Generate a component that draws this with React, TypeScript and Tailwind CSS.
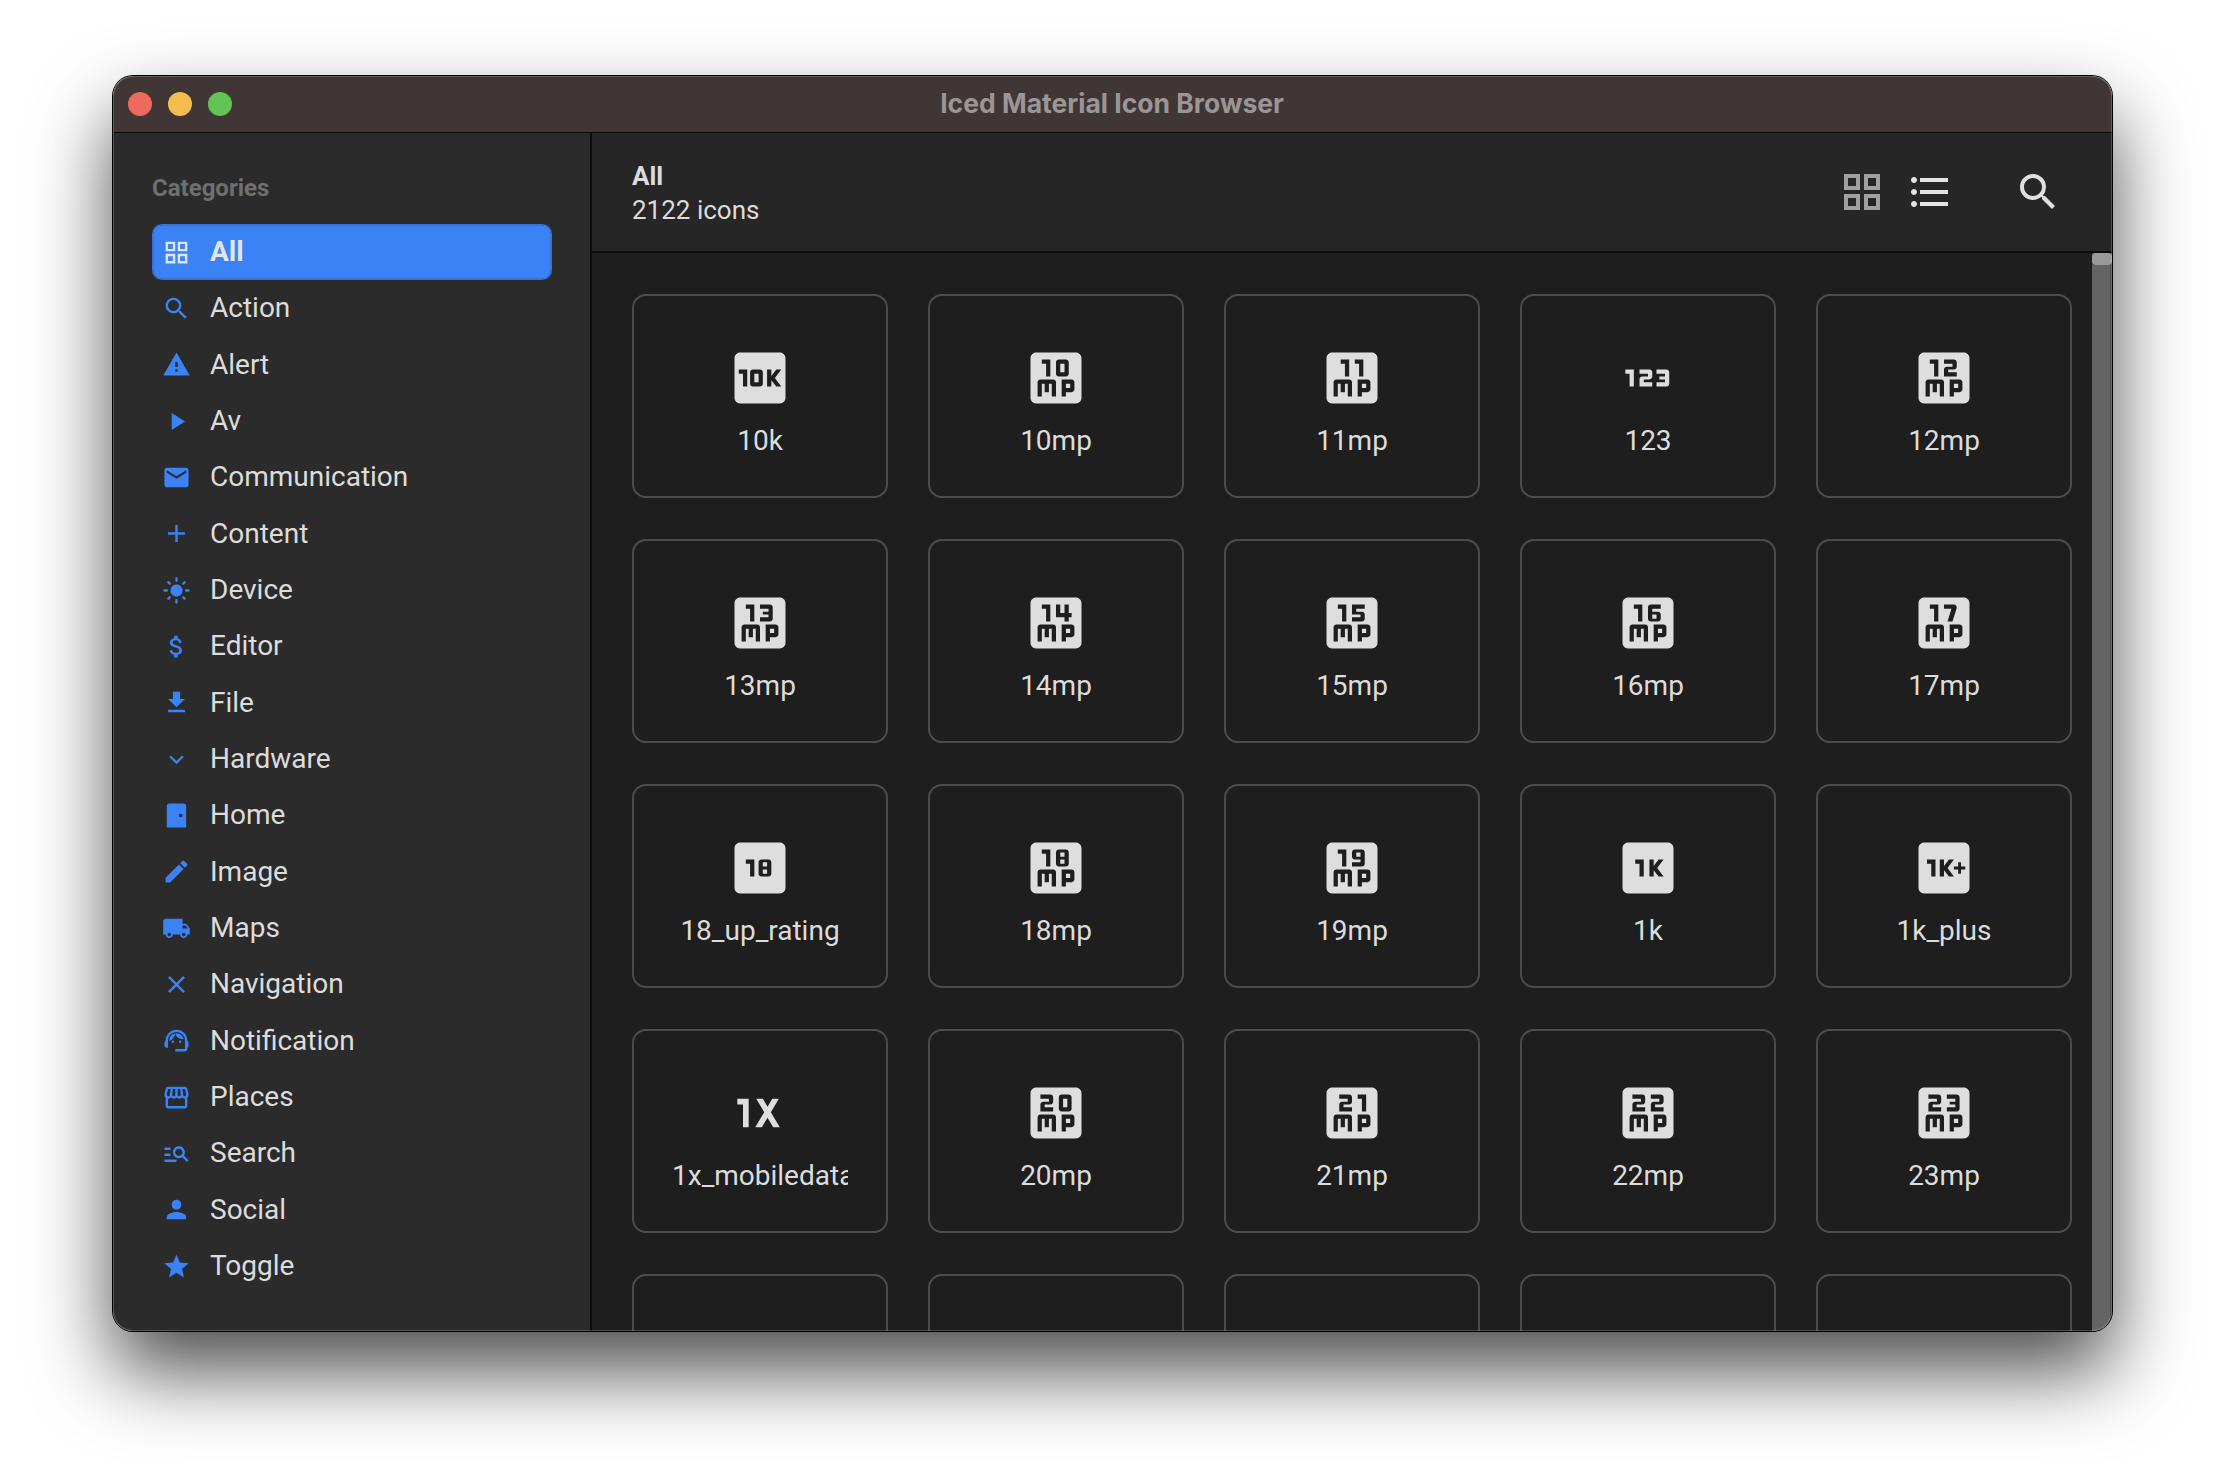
import React from "react";
import {
  MdOutlineGridView, MdSearch, MdWarning, MdPlayArrow, MdEmail, MdAdd, MdLightMode, MdAttachMoney,
  MdFileDownload, MdKeyboardArrowDown, MdSensorDoor, MdEdit, MdLocalShipping, MdClose, MdSupportAgent,
  MdStorefront, MdManageSearch, MdPerson, MdStar, MdFormatListBulleted,
  Md10K, Md10Mp, Md11Mp, Md123, Md12Mp, Md13Mp, Md14Mp, Md15Mp, Md16Mp, Md17Mp, Md18UpRating, Md18Mp,
  Md19Mp, Md1K, Md1kPlus, Md1xMobiledata, Md20Mp, Md21Mp, Md22Mp, Md23Mp,
} from "react-icons/md";

const categories: [string, React.ComponentType<{ size?: number; className?: string }>][] = [
  ["All", MdOutlineGridView], ["Action", MdSearch], ["Alert", MdWarning], ["Av", MdPlayArrow],
  ["Communication", MdEmail], ["Content", MdAdd], ["Device", MdLightMode], ["Editor", MdAttachMoney],
  ["File", MdFileDownload], ["Hardware", MdKeyboardArrowDown], ["Home", MdSensorDoor], ["Image", MdEdit],
  ["Maps", MdLocalShipping], ["Navigation", MdClose], ["Notification", MdSupportAgent], ["Places", MdStorefront],
  ["Search", MdManageSearch], ["Social", MdPerson], ["Toggle", MdStar],
];

const icons: [string, React.ComponentType<{ size?: number; className?: string }> | null][] = [
  ["10k", Md10K], ["10mp", Md10Mp], ["11mp", Md11Mp], ["123", Md123], ["12mp", Md12Mp],
  ["13mp", Md13Mp], ["14mp", Md14Mp], ["15mp", Md15Mp], ["16mp", Md16Mp], ["17mp", Md17Mp],
  ["18_up_rating", Md18UpRating], ["18mp", Md18Mp], ["19mp", Md19Mp], ["1k", Md1K], ["1k_plus", Md1kPlus],
  ["1x_mobiledata", Md1xMobiledata], ["20mp", Md20Mp], ["21mp", Md21Mp], ["22mp", Md22Mp], ["23mp", Md23Mp],
  ["", null], ["", null], ["", null], ["", null], ["", null],
];

export default function App() {
  return (
    <div className="w-[2224px] h-[1480px] bg-white pl-[113px] pt-[76px] overflow-hidden font-['Roboto',sans-serif]">
      <div className="relative w-[1999px] h-[1255px] rounded-[20px] flex flex-col shadow-[0_0_0_1px_#000,0_40px_80px_rgba(0,0,0,0.7)]">
        <div className="h-[57px] shrink-0 bg-[#403635] rounded-t-[20px] border-b border-b-[#0c0c0c] flex items-center relative">
          <div className="flex gap-4 pl-[15px]">
            <span className="w-6 h-6 rounded-full bg-[#ee6a5f]" />
            <span className="w-6 h-6 rounded-full bg-[#f5bd4f]" />
            <span className="w-6 h-6 rounded-full bg-[#61c454]" />
          </div>
          <div className="flex-1 text-center pr-[120px] text-[26.5px] font-bold text-[#9b9695] font-['Inter',sans-serif]">
            Iced Material Icon Browser
          </div>
        </div>
        <div className="flex-1 flex min-h-0 rounded-b-[20px] overflow-hidden">
          <aside className="w-[479px] shrink-0 bg-[#2b2b2b] border-r-2 border-r-[#0c0c0c] pt-[41px] pl-[39px] pr-[38px]">
            <div className="text-[24px] leading-[28px] font-bold text-[#6f6f6f] mb-[22px]">Categories</div>
            <div className="flex flex-col">
              {categories.map(([name, Icon], i) => (
                <div
                  key={name}
                  className={
                    i === 0
                      ? "h-[56.33px] flex items-center rounded-[10px] bg-[#3b82f6] border-2 border-[#3572d6] pl-[7.5px] text-[28px] font-bold text-[#e4e4e4]"
                      : "h-[56.33px] flex items-center pl-[9.5px] text-[28px] text-[#dcdcdc]"
                  }
                >
                  <span className={i === 0 ? "w-[48.5px] flex items-center text-[#dfe3ea]" : "w-[48.5px] flex items-center text-[#3b82f6]"}>
                    <Icon size={29} />
                  </span>
                  {name}
                </div>
              ))}
            </div>
          </aside>
          <main className="flex-1 min-w-0 flex flex-col">
            <header className="h-[120px] shrink-0 bg-[#262626] border-b-2 border-b-[#0c0c0c] flex items-center pl-[40px]">
              <div className="flex-1 text-[#dcdcdc] text-[26px] leading-[34px] pt-[2px]">
                <div className="font-bold">All</div>
                <div>2122 icons</div>
              </div>
              <div className="flex items-center pr-[50px]">
                <MdOutlineGridView size={48} className="text-[#a0a0a0] mr-[20px]" />
                <MdFormatListBulleted size={48} className="text-[#e4e4e4] mr-[60px]" />
                <MdSearch size={48} className="text-[#e0e0e0]" />
              </div>
            </header>
            <div className="flex-1 min-h-0 flex bg-[#1e1e1e]">
              <div className="flex-1 min-w-0 overflow-hidden pl-[40px] pr-[20px] pt-[41px]">
                <div className="grid grid-cols-5 gap-x-[40px] gap-y-[41px]">
                  {icons.map(([label, Icon], i) => (
                    <div
                      key={i}
                      className="h-[204px] rounded-[14px] border-2 border-[#4c4c4c] flex flex-col items-center pt-[48px]"
                    >
                      {Icon && <Icon size={68} className="text-[#dedede]" />}
                      {Icon && (
                        <div className="mt-[11px] w-[176px] overflow-hidden whitespace-nowrap text-center text-[28px] leading-[36px] text-[#dcdcdc]">
                          {label}
                        </div>
                      )}
                    </div>
                  ))}
                </div>
              </div>
              <div className="w-[20px] shrink-0 bg-[#4a4a4a] flex flex-col">
                <div className="h-[12px] rounded-[4px] bg-[#9a9a9a]" />
                <div className="flex-1 w-[18px] bg-[#646464]" />
              </div>
            </div>
          </main>
        </div>
        <div className="absolute inset-0 rounded-[20px] pointer-events-none shadow-[inset_0_0_0_1px_rgba(255,255,255,0.2)]" />
      </div>
    </div>
  );
}
